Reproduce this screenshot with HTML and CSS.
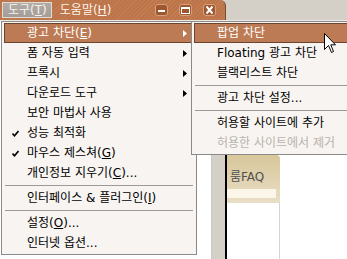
FILE: index.html
```html
<!DOCTYPE html>
<html lang="ko">
<head>
    <meta charset="UTF-8">
    <title>도구 메뉴</title>
    <link rel="stylesheet" href="styles.css">
</head>
<body>
    <div class="topbar">
        <div class="menubar">
            <span class="menu-title pressed">도구(<u>T</u>)</span>
            <span class="menu-title">도움말(<u>H</u>)</span>
            <div class="win-buttons">
                <span class="win-btn">
                    <svg width="11" height="10" viewBox="0 0 11 10"><rect x="2" y="5" width="7" height="2" fill="#fff"/></svg>
                </span>
                <span class="win-btn">
                    <svg width="11" height="10" viewBox="0 0 11 10"><rect x="1.5" y="2.5" width="8" height="6" fill="none" stroke="#fff"/><rect x="1" y="2" width="9" height="2" fill="#fff"/></svg>
                </span>
                <span class="win-btn">
                    <svg width="11" height="10" viewBox="0 0 11 10"><path d="M2.5 1.5 L8.5 8.5 M8.5 1.5 L2.5 8.5" stroke="#fff" stroke-width="2"/></svg>
                </span>
            </div>
        </div>
        <div class="topbar-rest"></div>
    </div>

    <div class="content">
        <div class="blank"></div>
        <div class="sidebar"></div>
        <div class="column">
            <div class="tab">
                <div class="tab-title">룸FAQ</div>
                <div class="tab-input"></div>
            </div>
            <div class="column-body"></div>
        </div>
    </div>

    <!-- 도구 메뉴 -->
    <ul class="menu main-menu">
        <li class="item active"><span class="gutter"></span><span class="label">광고 차단(<u>E</u>)</span><svg class="arrow" width="4" height="7"><polygon points="0,0 4,3.5 0,7" fill="#fff"/></svg></li>
        <li class="item"><span class="gutter"></span><span class="label">폼 자동 입력</span><svg class="arrow" width="4" height="7"><polygon points="0,0 4,3.5 0,7"/></svg></li>
        <li class="item"><span class="gutter"></span><span class="label">프록시</span><svg class="arrow" width="4" height="7"><polygon points="0,0 4,3.5 0,7"/></svg></li>
        <li class="item"><span class="gutter"></span><span class="label">다운로드 도구</span><svg class="arrow" width="4" height="7"><polygon points="0,0 4,3.5 0,7"/></svg></li>
        <li class="item"><span class="gutter"></span><span class="label">보안 마법사 사용</span></li>
        <li class="item"><span class="gutter"><svg class="check" width="7" height="7"><path d="M0.5 3.5 L2.5 5.8 L6.5 1" fill="none" stroke="#000" stroke-width="1.6"/></svg></span><span class="label">성능 최적화</span></li>
        <li class="item"><span class="gutter"><svg class="check" width="7" height="7"><path d="M0.5 3.5 L2.5 5.8 L6.5 1" fill="none" stroke="#000" stroke-width="1.6"/></svg></span><span class="label">마우스 제스쳐(<u>G</u>)</span></li>
        <li class="item"><span class="gutter"></span><span class="label">개인정보 지우기(<u>C</u>)...</span></li>
        <li class="separator"></li>
        <li class="item"><span class="gutter"></span><span class="label">인터페이스 &amp; 플러그인(<u>I</u>)</span></li>
        <li class="separator"></li>
        <li class="item"><span class="gutter"></span><span class="label">설정(<u>O</u>)...</span></li>
        <li class="item"><span class="gutter"></span><span class="label">인터넷 옵션...</span></li>
    </ul>

    <!-- 광고 차단 하위 메뉴 -->
    <ul class="menu sub-menu">
        <li class="item active"><span class="gutter"></span><span class="label">팝업 차단</span></li>
        <li class="item"><span class="gutter"></span><span class="label">Floating 광고 차단</span></li>
        <li class="item"><span class="gutter"></span><span class="label">블랙리스트 차단</span></li>
        <li class="separator"></li>
        <li class="item"><span class="gutter"></span><span class="label">광고 차단 설정...</span></li>
        <li class="separator"></li>
        <li class="item"><span class="gutter"></span><span class="label">허용할 사이트에 추가</span></li>
        <li class="item disabled"><span class="gutter"></span><span class="label">허용한 사이트에서 제거</span></li>
    </ul>

    <svg class="cursor" width="13" height="21" viewBox="0 0 13 21">
        <path d="M0.5 0.5 L0.5 16.5 L4.5 12.5 L7.5 19.5 L9.5 18.5 L6.8 11.8 L11.5 11.8 Z" fill="#fff" stroke="#000" stroke-width="1"/>
    </svg>
</body>
</html>
```

FILE: styles.css
```css
* {
    box-sizing: border-box;
}
html, body {
    margin: 0;
    padding: 0;
}
body {
    position: relative;
    width: 347px;
    height: 259px;
    overflow: hidden;
    background: #fff;
    font-family: "DejaVu Sans", "Noto Sans CJK KR", sans-serif;
    font-size: 12px;
    color: #000;
}
u {
    text-decoration: underline;
    text-underline-offset: 1px;
}

/* 상단 메뉴바 */
.topbar {
    display: flex;
    height: 21px;
    background: #d4d0c8;
    border-bottom: 1px solid #eeebe6;
}
.menubar {
    display: flex;
    align-items: center;
    width: 226px;
    height: 20px;
    padding-left: 2px;
    background: repeating-linear-gradient(135deg, #c47c51 0 1px, #bc744a 1px 3px);
    border-right: 1px solid #7a4a2e;
    border-top-right-radius: 6px;
}
.menu-title {
    height: 16px;
    line-height: 14px;
    padding: 0 4px 0 5px;
    margin-right: 6px;
    color: #fbf3ea;
    border: 1px solid transparent;
}
.menu-title.pressed {
    background: linear-gradient(#b3aca6, #a49d97);
    border-color: #e2dbd4;
    color: #f6f2ee;
    margin-right: 2px;
}
.win-buttons {
    display: flex;
    gap: 11px;
    margin-left: auto;
    padding-right: 9px;
}
.win-btn {
    display: flex;
    align-items: center;
    justify-content: center;
    width: 13px;
    height: 12px;
    background: #9c5630;
    border: 1px solid #d9a07a;
    border-radius: 3px;
}
.topbar-rest {
    flex: 1;
}

/* 아래 영역 */
.content {
    display: flex;
    height: 238px;
}
.blank {
    width: 212px;
    border-right: 1px solid #c8c8c8;
}
.sidebar {
    width: 15px;
    background: #d4d0c8;
    border-right: 2px solid #000;
}
.column {
    display: flex;
    flex-direction: column;
    width: 53px;
    padding-top: 134px;
}
.tab {
    height: 48px;
    padding: 15px 4px 0 0;
    background: linear-gradient(#d8c79a, #e9dfc6);
    border-top-right-radius: 4px;
}
.tab-title {
    padding-left: 3px;
    line-height: 14px;
    color: #505050;
}
.tab-input {
    height: 9px;
    margin-top: 5px;
    background: #fcf6ea;
}
.column-body {
    flex: 1;
    border-right: 1px solid #d4d4d4;
}

/* 드롭다운 메뉴 */
.menu {
    position: absolute;
    top: 21px;
    margin: 0;
    padding: 1px 2px;
    list-style: none;
    background: #f7f4f1;
    border: 1px solid #8a8a8a;
}
.main-menu {
    left: 1px;
    width: 196px;
}
.sub-menu {
    left: 191px;
    width: 170px;
}
.item {
    display: flex;
    align-items: center;
    height: 20px;
    line-height: 20px;
    border: 1px solid transparent;
    white-space: nowrap;
}
.item.active {
    background: #bc7b55;
    border-color: #6a4530;
    color: #fff;
}
.item.disabled {
    color: #b9b3ad;
}
.gutter {
    display: flex;
    align-items: center;
    width: 22px;
    height: 100%;
    padding-left: 7px;
}
.label {
    flex: 1;
}
.arrow {
    margin-right: 6px;
}
.separator {
    height: 5px;
    margin: 0 1px;
    border-top: 2px solid transparent;
    background: linear-gradient(#9a9a9a 0 1px, transparent 1px);
}

.cursor {
    position: absolute;
    left: 324px;
    top: 33px;
}
```
